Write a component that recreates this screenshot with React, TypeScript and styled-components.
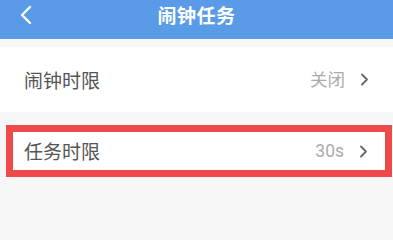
import React from "react";
import styled, { createGlobalStyle } from "styled-components";

const GlobalStyle = createGlobalStyle`
  html, body {
    margin: 0;
    padding: 0;
    background: #f7f7f7;
    font-family: "Noto Sans CJK SC", "Noto Sans", sans-serif;
  }
`;

const Page = styled.div`
  width: 393px;
  height: 226px;
  overflow: hidden;
  background: #f7f7f7;
  display: flex;
  flex-direction: column;
`;

const Header = styled.header`
  height: 39px;
  background: #5a9be8;
  display: grid;
  grid-template-columns: 60px 1fr 60px;
  align-items: start;
  padding-top: 3px;
  box-sizing: border-box;
`;

const BackButton = styled.button`
  border: 0;
  background: transparent;
  padding: 0 0 0 19px;
  height: 24px;
  display: flex;
  align-items: center;
  cursor: pointer;
`;

const Title = styled.h1`
  margin: 0;
  text-align: center;
  color: #ffffff;
  font-size: 19px;
  font-weight: 700;
  line-height: 24px;
  letter-spacing: 0.5px;
`;

const List = styled.div`
  display: flex;
  flex-direction: column;
  padding-top: 8px;
  gap: 13px;
`;

const Row = styled.div<{ $height: number }>`
  height: ${(p) => p.$height}px;
  background: #ffffff;
  display: flex;
  align-items: center;
  padding: 0 24px 0 24px;
  box-sizing: border-box;
`;

const Highlight = styled.div`
  margin: 0 1px 0 6px;
  border: 7px solid #ef4a4a;

  & > ${Row} {
    padding-left: 11px;
    padding-right: 17px;
  }
`;

const Label = styled.span`
  flex: 1;
  color: #555555;
  font-size: 19px;
  line-height: 24px;
`;

const Value = styled.span`
  color: #ababab;
  font-size: 17.5px;
  line-height: 24px;
  margin-right: 15px;
  font-family: Roboto, "Noto Sans CJK SC", sans-serif;
`;

const Chevron = ({ color = "#666" }: { color?: string }) => (
  <svg width="9" height="13" viewBox="0 0 9 13" fill="none">
    <path d="M2 1.5 L7 6.5 L2 11.5" stroke={color} strokeWidth="1.8" strokeLinecap="round" strokeLinejoin="round" />
  </svg>
);

const BackIcon = () => (
  <svg width="14" height="20" viewBox="0 0 14 20" fill="none">
    <path d="M11 2 L3 10 L11 18" stroke="#ffffff" strokeWidth="2.4" strokeLinecap="round" strokeLinejoin="round" />
  </svg>
);

export default function App() {
  return (
    <>
      <GlobalStyle />
      <Page>
        <Header>
          <BackButton aria-label="返回">
            <BackIcon />
          </BackButton>
          <Title>闹钟任务</Title>
          <span />
        </Header>
        <List>
          <Row $height={65}>
            <Label>闹钟时限</Label>
            <Value>关闭</Value>
            <Chevron />
          </Row>
          <Highlight>
            <Row $height={38}>
              <Label>任务时限</Label>
              <Value>30s</Value>
              <Chevron />
            </Row>
          </Highlight>
        </List>
      </Page>
    </>
  );
}
